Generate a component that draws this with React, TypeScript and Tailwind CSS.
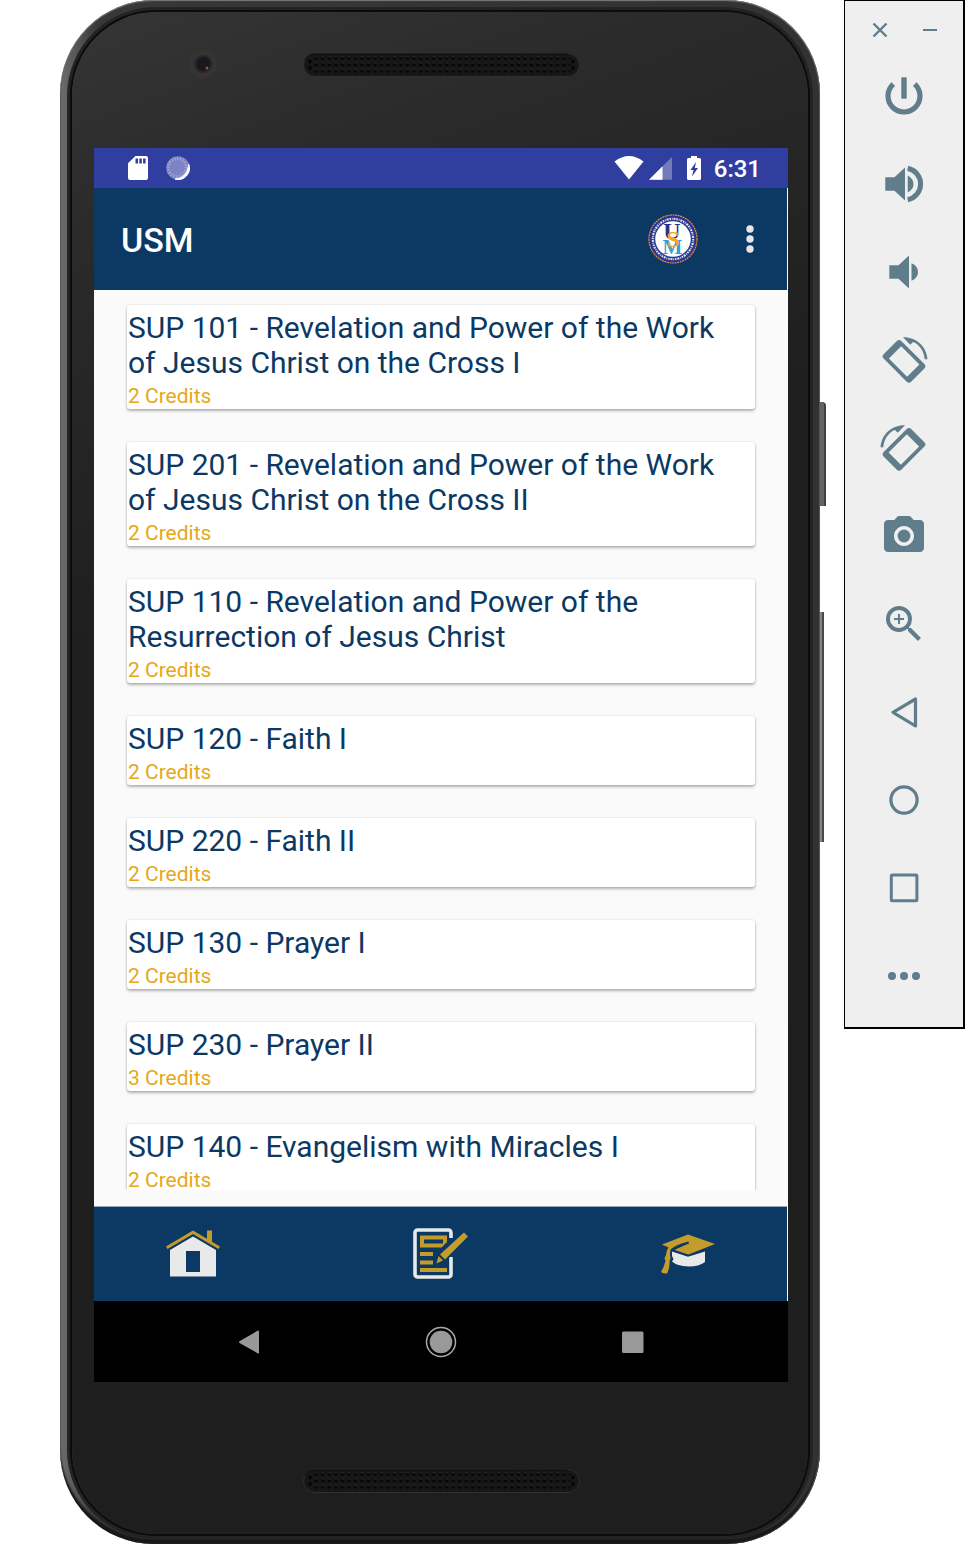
import type { ReactNode } from "react";
import { MdPhotoCamera, MdZoomIn } from "react-icons/md";

type Course = { code: string; name: string; credits: number };

const courses: Course[] = [
  { code: "SUP 101", name: "Revelation and Power of the Work of Jesus Christ on the Cross I", credits: 2 },
  { code: "SUP 201", name: "Revelation and Power of the Work of Jesus Christ on the Cross II", credits: 2 },
  { code: "SUP 110", name: "Revelation and Power of the Resurrection of Jesus Christ", credits: 2 },
  { code: "SUP 120", name: "Faith I", credits: 2 },
  { code: "SUP 220", name: "Faith II", credits: 2 },
  { code: "SUP 130", name: "Prayer I", credits: 2 },
  { code: "SUP 230", name: "Prayer II", credits: 3 },
  { code: "SUP 140", name: "Evangelism with Miracles I", credits: 2 },
];

function Speaker({ id }: { id: string }) {
  return (
    <svg className="h-6 w-[277px] shrink-0" viewBox="0 0 277 24" aria-hidden="true">
      <defs>
        <pattern id={id} x="10" y="2" width="6.52" height="6.4" patternUnits="userSpaceOnUse">
          <circle cx="3.3" cy="3.2" r="1.9" fill="#060606" />
          <path d="M2.4 1.8A2 2 0 0 1 4.6 2" stroke="#3a3a3a" strokeWidth="0.8" fill="none" />
        </pattern>
      </defs>
      <rect x="0.5" y="0.5" width="276" height="23" rx="11.5" fill="#171717" stroke="#303030" />
      <path d="M2 7Q5 1 12 1H265" stroke="#0c0c0c" fill="none" />
      <rect x="10" y="2.4" width="257.5" height="19" fill={`url(#${id})`} />
      <g fill="#060606">
        <circle cx="7" cy="8.6" r="1.9" />
        <circle cx="7" cy="15" r="1.9" />
        <circle cx="270" cy="8.6" r="1.9" />
        <circle cx="270" cy="15" r="1.9" />
      </g>
    </svg>
  );
}

function StatusBar() {
  return (
    <div className="flex h-10 items-center justify-between bg-[#303f9f] pl-8 pr-[27px] text-white">
      <div className="flex items-center gap-4">
        <svg className="size-6" viewBox="0 0 24 24" aria-label="SD card">
          <path
            fill="currentColor"
            fillRule="evenodd"
            d="M9.5 0H20a2 2 0 0 1 2 2v20a2 2 0 0 1-2 2H4a2 2 0 0 1-2-2V7.200zM9.500 2.500v5h2.500v-5zM13.300 2.500v5h2.500v-5zM17.100 2.500v5h2.500v-5z"
          />
        </svg>
        <svg className="size-6" viewBox="0 0 24 24" aria-label="Syncing">
          <circle cx="12" cy="12" r="11.800" fill="#7c84c6" />
          <path d="M22.800 8.500A11.200 11.200 0 0 1 9 23Q20.500 22 22.800 8.500z" fill="#fff" stroke="#fff" />
          <circle cx="11.300" cy="11.500" r="9" fill="none" stroke="#a9afdc" strokeWidth="3" strokeDasharray="1 1.800" />
        </svg>
      </div>
      <div className="flex items-center">
        <svg className="h-6 w-[30px]" viewBox="0 0 30 24" aria-label="Wi-Fi">
          <path fill="currentColor" d="M0.500 5.500Q15-5.500 29.500 5.500L15 23.500z" />
        </svg>
        <svg className="ml-1 h-6 w-6" viewBox="0 0 24 24" aria-label="Signal">
          <path fill="#737bbd" d="M24 1v22.700H1z" />
          <path fill="currentColor" d="M14.500 10.300v13.400H1z" />
        </svg>
        <svg className="ml-3.5 h-6 w-4" viewBox="0 0 16 24" aria-label="Charging">
          <path
            fill="currentColor"
            fillRule="evenodd"
            d="M5 0h6v2h2.500a1.500 1.500 0 0 1 1.500 1.500v19a1.500 1.500 0 0 1-1.500 1.500h-11A1.500 1.500 0 0 1 1 22.500v-19A1.500 1.500 0 0 1 2.500 2H5zM10 6L4.500 14H7.500L6 20.500L12 12H8.800z"
          />
        </svg>
        <time className="ml-3 pt-0.5 text-2xl font-medium leading-6">6:31</time>
      </div>
    </div>
  );
}

function SealLogo() {
  return (
    <svg className="size-[52px]" viewBox="0 0 52 52" role="img" aria-label="USM seal">
      <circle cx="26" cy="26" r="25" fill="#2b2f7f" />
      <circle cx="26" cy="26" r="24" fill="none" stroke="#d9903a" strokeWidth="1.200" strokeDasharray="2 0.600" />
      <circle cx="26" cy="26" r="22.500" fill="#2c3b93" />
      <circle cx="26" cy="26" r="20.200" fill="none" stroke="#dfe3f5" strokeWidth="2" strokeDasharray="1.500 0.900 0.800 0.900 2 0.900" />
      <circle cx="26" cy="26" r="17.800" fill="#fff" />
      <g fontFamily="'Liberation Serif', serif" fontWeight="700" textAnchor="middle">
        <text x="25" y="26" fontSize="24" fill="#2c2f86">U</text>
        <text x="25.500" y="41" fontSize="21" fill="#29a3dc">M</text>
        <text x="26" y="34" fontSize="24" fill="#f6a623">S</text>
      </g>
    </svg>
  );
}

function AppBar() {
  return (
    <header className="mr-px flex h-[102px] items-center justify-between bg-[#0c3964] pl-[27px] pr-[23px]">
      <h1 className="pt-0.5 text-[34px] font-medium leading-10 text-white">USM</h1>
      <div className="flex items-center gap-[37px]">
        <SealLogo />
        <button type="button" aria-label="More options" className="flex h-12 w-7 items-center justify-center">
          <svg className="h-7 w-2" viewBox="0 0 8 28" fill="#e7e7e7" aria-hidden="true">
            <circle cx="4" cy="4" r="3.700" />
            <circle cx="4" cy="14" r="3.700" />
            <circle cx="4" cy="24" r="3.700" />
          </svg>
        </button>
      </div>
    </header>
  );
}

function CourseCard({ course }: { course: Course }) {
  return (
    <li className="rounded-[3px] bg-white pb-0.5 pl-px pr-2 pt-[5px] shadow-[0_2px_3px_rgba(0,0,0,0.28),0_0_2px_rgba(0,0,0,0.16)]">
      <h2 className="text-[30px] leading-[35px] text-[#0c3964]">{`${course.code} - ${course.name}`}</h2>
      <p className="pt-[5px] text-[21px] leading-[22px] text-[#e6a817]">{`${course.credits} Credits`}</p>
    </li>
  );
}

function HomeIcon() {
  return (
    <svg className="size-[54px]" viewBox="0 0 54 54" aria-hidden="true">
      <path fill="#c49c2c" d="M27 3.500L54 19.500L52.500 22L27 7L1.500 22L0 19.500z" />
      <path fill="#c49c2c" d="M41 3.500h5v12.500l-5-3z" />
      <path fill="#e8e9e8" fillRule="evenodd" d="M27 9.500L50 23v26.500H4V23zM20 24v21h14V24z" />
    </svg>
  );
}

function NotesIcon() {
  return (
    <svg className="size-[54px] overflow-visible" viewBox="1 0 54 54" aria-hidden="true">
      <path d="M38 11V5.500a2.500 2.500 0 0 0-2.500-2.500H4.500A2.500 2.500 0 0 0 2 5.500v42A2.500 2.500 0 0 0 4.500 50h31a2.500 2.500 0 0 0 2.500-2.500V30" fill="none" stroke="#e8e9e8" strokeWidth="3.600" />
      <path fill="#c49c2c" fillRule="evenodd" d="M7 8.500h27v6.500l-5.500 5.500H7zM11 12.500v4h19v-4z" />
      <path fill="#c49c2c" d="M7 25h13v4H7zM7 33.500h13v4H7zM7 41h27v4H7z" />
      <path d="M50 6L54 10L31.500 32.500L23 36.500L26.500 27.800z" fill="none" stroke="#0c3964" strokeWidth="4" />
      <path fill="#c49c2c" d="M51 5.500L55 9.500L32 32.500L27 27.500zM25.500 29L30 33.500L23.500 36.500z" />
    </svg>
  );
}

function CapIcon() {
  return (
    <svg className="size-[54px]" viewBox="0 0 54 54" aria-hidden="true">
      <path fill="#e8e9e8" d="M11 24.500L27 29.700L44 24.500V35Q38 39.500 27.500 39.500Q16 39 11 34.500L12.500 32L11 29z" />
      <path fill="#c49c2c" d="M27 7.500L54 17L27.500 27.500L13.500 23Q19 20 28 16.500L27.500 14.500Q14 18 9.500 22.500Q9 26 9 28L9.500 31.500L8.500 34Q9 41 6 46.500Q3 47 0 45Q3 40 4.500 34L3.500 31L5 28Q5.500 23 7.500 20.500L1 17.500z" />
    </svg>
  );
}

function BottomNav() {
  const items: { label: string; icon: ReactNode }[] = [
    { label: "Home", icon: <HomeIcon /> },
    { label: "Notes", icon: <NotesIcon /> },
    { label: "Courses", icon: <CapIcon /> },
  ];
  return (
    <nav className="mr-px flex h-[95px] items-center justify-between border-t border-[#9aa9b8] bg-[#0c3964] px-[72px]">
      {items.map((item) => (
        <button key={item.label} type="button" aria-label={item.label}>
          {item.icon}
        </button>
      ))}
    </nav>
  );
}

function SystemNav() {
  return (
    <div className="flex h-[81px] items-center justify-center gap-40 bg-black">
      <button type="button" aria-label="Back">
        <svg className="size-8" viewBox="0 0 32 32" fill="#999" aria-hidden="true">
          <path d="M25 4.500Q26 4 26 5.500v21Q26 28 25 27.500L6.500 17Q5.500 16 6.500 15.200z" />
        </svg>
      </button>
      <button type="button" aria-label="Home">
        <svg className="size-8" viewBox="0 0 32 32" fill="#999" aria-hidden="true">
          <circle cx="16" cy="16" r="11.300" />
          <circle cx="16" cy="16" r="14.500" fill="none" stroke="#aaa" strokeWidth="1.500" />
        </svg>
      </button>
      <button type="button" aria-label="Recent apps">
        <svg className="size-8" viewBox="0 0 32 32" fill="#999" aria-hidden="true">
          <rect x="5" y="5.500" width="21.500" height="21.500" rx="1.500" />
        </svg>
      </button>
    </div>
  );
}

function Phone() {
  return (
    <div className="relative flex-1">
      <div className="absolute left-full top-[402px] h-[104px] w-1.5 rounded-tr-sm border-r-2 border-[#423f40] bg-[#646464]" />
      <div className="absolute left-full top-[612px] h-[230px] w-1 border-r-2 border-[#4a4849] bg-[#838383]" />
      <div className="rounded-[94px] bg-linear-to-r from-[#6e6e6e] via-[#383838] via-5% to-[#333132] px-3 pb-2.5 pt-3 shadow-[inset_0_1px_1px_#7d7d7d,inset_-1px_0_1px_#555,inset_0_-5px_2px_#181818]">
        <div className="rounded-[84px] bg-[linear-gradient(160deg,#353537_0%,#2b2b2b_12%,#1f1f1f_35%,#1e1e1e_100%)] pl-[22px] pr-5 shadow-[0_0_0_2px_#0b0b0b,0_0_0_5px_#232323]">
          <div className="flex h-[136px] items-start pt-[41px]">
            <div className="flex-1">
              <svg className="-mt-1 ml-[94px] size-[30px]" viewBox="0 0 30 30" aria-hidden="true">
                <circle cx="15" cy="15" r="14.500" fill="#343434" />
                <circle cx="15" cy="15" r="9" fill="#272628" />
                <circle cx="15.500" cy="15" r="7" fill="#1a181e" />
                <circle cx="19" cy="19" r="1.500" fill="#8e5560" />
              </svg>
            </div>
            <Speaker id="earpiece-holes" />
            <div className="flex-1" />
          </div>
          <main className="flex h-[1234px] flex-col bg-[#fafafa]">
            <StatusBar />
            <AppBar />
            <div className="mb-4 min-h-0 flex-1 overflow-y-auto px-6 [scrollbar-width:none]">
              <ul className="flex flex-col gap-[33px] px-[9px] py-[15px]">
                {courses.map((course) => (
                  <CourseCard key={course.code} course={course} />
                ))}
              </ul>
            </div>
            <BottomNav />
            <SystemNav />
          </main>
          <div className="flex h-[152px] justify-center pt-[87px]">
            <Speaker id="loudspeaker-holes" />
          </div>
        </div>
      </div>
    </div>
  );
}

function Glyph({ children }: { children: ReactNode }) {
  return (
    <svg className="size-12" viewBox="0 0 48 48" fill="currentColor" aria-hidden="true">
      {children}
    </svg>
  );
}

const rotateShapes = (
  <>
    <path
      fillRule="evenodd"
      transform="rotate(45 24 25.300)"
      d="M8 12.800h32a3.500 3.500 0 0 1 3.500 3.500v18a3.500 3.500 0 0 1-3.500 3.500H8a3.500 3.500 0 0 1-3.500-3.500V16.300a3.500 3.500 0 0 1 3.500-3.500zM11.300 16.600v17.400h25.800V16.600z"
    />
    <path d="M23 1.300C36.500 1 46.500 10.500 47.500 23.300H44.700C44 15 39.500 8.500 33 6L30.300 8.800z" />
  </>
);

const tools: { label: string; icon: ReactNode }[] = [
  {
    label: "Power",
    icon: (
      <Glyph>
        <path d="M13.300 12.100A16 16 0 1 0 34.700 12.100" fill="none" stroke="currentColor" strokeWidth="5.200" />
        <path d="M21.300 5.300h5.400v21.400h-5.400z" />
      </Glyph>
    ),
  },
  {
    label: "Volume up",
    icon: (
      <Glyph>
        <path d="M5.300 17.300h9.200L25 7.500v33L14.500 30.700H5.300zM27.700 15.500Q33.500 18.500 33.500 24T27.700 32.500z" />
        <path d="M27.700 8.300A16 16 0 0 1 27.700 39.700" fill="none" stroke="currentColor" strokeWidth="5" />
      </Glyph>
    ),
  },
  {
    label: "Volume down",
    icon: (
      <Glyph>
        <path d="M9.300 17.300h9.200L29 7.500v33L18.500 30.700H9.300zM31.500 15.200Q38 18 38 24T31.500 32.800z" />
      </Glyph>
    ),
  },
  { label: "Rotate left", icon: <Glyph>{rotateShapes}</Glyph> },
  {
    label: "Rotate right",
    icon: (
      <Glyph>
        <g transform="translate(48 0) scale(-1 1)">{rotateShapes}</g>
      </Glyph>
    ),
  },
  { label: "Take screenshot", icon: <MdPhotoCamera className="size-12" /> },
  { label: "Zoom", icon: <MdZoomIn className="size-12" /> },
  {
    label: "Back",
    icon: (
      <Glyph>
        <path d="M13 24.300L35.500 11v27z" fill="none" stroke="currentColor" strokeWidth="3.200" strokeLinejoin="round" />
      </Glyph>
    ),
  },
  {
    label: "Home",
    icon: (
      <Glyph>
        <circle cx="24" cy="24" r="13.100" fill="none" stroke="currentColor" strokeWidth="3.200" />
      </Glyph>
    ),
  },
  {
    label: "Overview",
    icon: (
      <Glyph>
        <rect x="11.300" y="11" width="25.600" height="25.800" rx="1" fill="none" stroke="currentColor" strokeWidth="3" />
      </Glyph>
    ),
  },
  {
    label: "More",
    icon: (
      <Glyph>
        <circle cx="12" cy="24" r="4" />
        <circle cx="24" cy="24" r="4" />
        <circle cx="36" cy="24" r="4" />
      </Glyph>
    ),
  },
];

function EmulatorToolbar() {
  return (
    <aside className="w-[121px] shrink-0 border-b-2 border-l border-r-2 border-t border-black bg-[#efefef] pb-[27px] pt-[19px] text-[#607d8b]">
      <div className="flex justify-center gap-[30px] pl-0.5">
        <button type="button" aria-label="Close">
          <svg className="size-5" viewBox="0 0 20 20" aria-hidden="true">
            <path d="M3.500 3.500l13 13M16.500 3.500l-13 13" stroke="currentColor" strokeWidth="2.400" />
          </svg>
        </button>
        <button type="button" aria-label="Minimize">
          <svg className="size-5" viewBox="0 0 20 20" aria-hidden="true">
            <path d="M3 10h14" stroke="currentColor" strokeWidth="2" />
          </svg>
        </button>
      </div>
      <div className="mt-8 flex flex-col items-center gap-10">
        {tools.map((tool) => (
          <button key={tool.label} type="button" aria-label={tool.label}>
            {tool.icon}
          </button>
        ))}
      </div>
    </aside>
  );
}

export default function App() {
  return (
    <div className="flex min-h-screen items-start gap-6 bg-white pl-[60px] pr-px font-[Roboto,sans-serif]">
      <Phone />
      <EmulatorToolbar />
    </div>
  );
}
